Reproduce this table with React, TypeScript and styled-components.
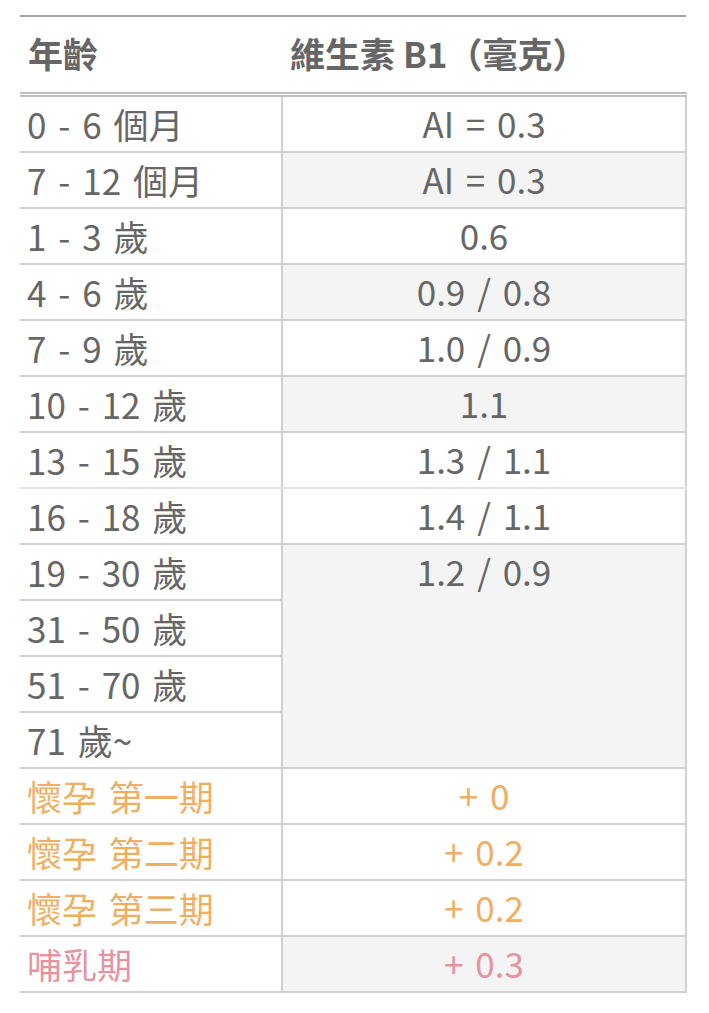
import styled, { createGlobalStyle } from "styled-components"

const GlobalStyle = createGlobalStyle`
	body {
		margin: 0;
		background: #ffffff;
		font-family: "Noto Sans CJK TC", "Noto Sans", sans-serif;
	}
`

type Tone = "plain" | "pregnant" | "nursing"

type Row = {
	age: string
	value?: string
	span?: number
	shaded?: boolean
	tone?: Tone
	softLine?: boolean
}

const rows: Row[] = [
	{ age: "0 - 6 個月", value: "AI = 0.3" },
	{ age: "7 - 12 個月", value: "AI = 0.3", shaded: true },
	{ age: "1 - 3 歲", value: "0.6" },
	{ age: "4 - 6 歲", value: "0.9 / 0.8", shaded: true },
	{ age: "7 - 9 歲", value: "1.0 / 0.9" },
	{ age: "10 - 12 歲", value: "1.1", shaded: true },
	{ age: "13 - 15 歲", value: "1.3 / 1.1", softLine: true },
	{ age: "16 - 18 歲", value: "1.4 / 1.1" },
	{ age: "19 - 30 歲", value: "1.2 / 0.9", span: 4, shaded: true },
	{ age: "31 - 50 歲" },
	{ age: "51 - 70 歲" },
	{ age: "71 歲~" },
	{ age: "懷孕 第一期", value: "+ 0", tone: "pregnant" },
	{ age: "懷孕 第二期", value: "+ 0.2", tone: "pregnant" },
	{ age: "懷孕 第三期", value: "+ 0.2", tone: "pregnant" },
	{ age: "哺乳期", value: "+ 0.3", tone: "nursing", shaded: true },
]

const toneColor = (tone: Tone = "plain") =>
	tone === "pregnant" ? "#efae62" : tone === "nursing" ? "#e7939e" : "#666666"

export default function App() {
	return (
		<>
			<GlobalStyle />
			<Page>
				<Table>
					<colgroup>
						<col style={{ width: 262 }} />
						<col />
					</colgroup>
					<thead>
						<tr>
							<HeadCell>年齡</HeadCell>
							<HeadCell>維生素 B1（毫克）</HeadCell>
						</tr>
					</thead>
					<tbody>
						{rows.map((row) => (
							<tr key={row.age}>
								<AgeCell $tone={row.tone} $soft={row.softLine}>
									{row.age}
								</AgeCell>
								{row.value !== undefined && (
									<ValueCell
										rowSpan={row.span}
										$tone={row.tone}
										$shaded={row.shaded}
										$soft={row.softLine}
									>
										{row.value}
									</ValueCell>
								)}
							</tr>
						))}
					</tbody>
				</Table>
			</Page>
		</>
	)
}

const Page = styled.div`
	padding: 15px 22px 0 20px;
`

const Table = styled.table`
	width: 667px;
	table-layout: fixed;
	border-collapse: collapse;
	border-top: 2px solid #a4a4a4;
`

const HeadCell = styled.th`
	height: 70px;
	padding: 0 8px 5px;
	text-align: left;
	font-size: 35px;
	font-weight: 700;
	color: #666666;
	border-bottom: 5px double #c0c0c0;
	white-space: nowrap;
`

const AgeCell = styled.td<{ $tone?: Tone; $soft?: boolean }>`
	height: 52px;
	padding: 0 7px 2px;
	font-size: 35px;
	line-height: 1;
	word-spacing: 4px;
	color: ${(p) => toneColor(p.$tone)};
	border-bottom: 2px solid ${(p) => (p.$soft ? "#e2e2e2" : "#d0d0d0")};
	border-right: 2px solid #d0d0d0;
	white-space: nowrap;
`

const ValueCell = styled.td<{ $tone?: Tone; $shaded?: boolean; $soft?: boolean }>`
	height: 52px;
	padding: 0 8px 2px;
	font-size: 35px;
	line-height: 52px;
	word-spacing: 4px;
	text-align: center;
	vertical-align: top;
	color: ${(p) => toneColor(p.$tone)};
	background: ${(p) => (p.$shaded ? "#f4f4f4" : "#ffffff")};
	border-bottom: 2px solid ${(p) => (p.$soft ? "#e2e2e2" : "#d0d0d0")};
	border-right: 2px solid #d0d0d0;
	white-space: nowrap;
`
